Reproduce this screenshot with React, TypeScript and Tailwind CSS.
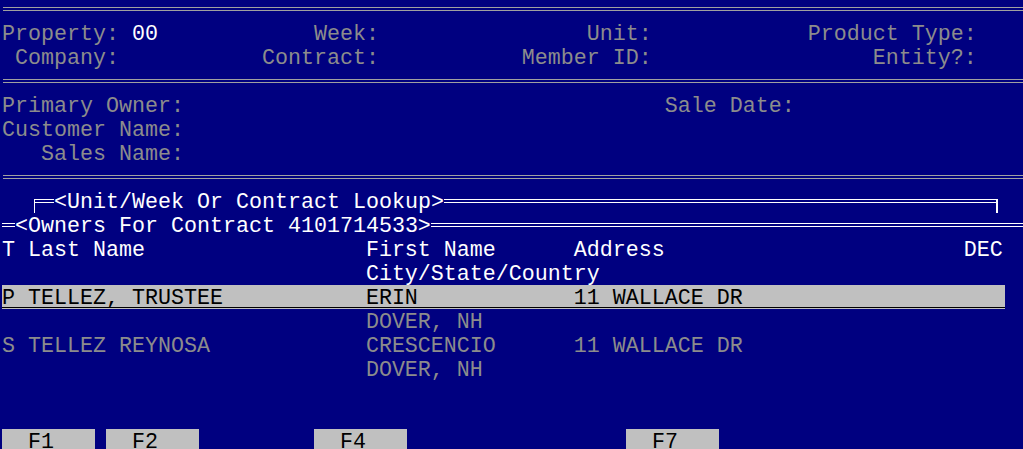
const gray = "text-[#8c8c8c]";

// lay text out on the terminal's character grid
const cols = (...parts: [number, string][]) =>
  parts.reduce((s, [c, t]) => s.padEnd(c) + t, "");

const DoubleLine = ({ white = false }: { white?: boolean }) => (
  <div
    className={`h-[4px] flex-1 border-y ${white ? "border-white" : "border-[#a0a0a0]"}`}
  />
);

const Row = ({ children, className = "" }: { children?: React.ReactNode; className?: string }) => (
  <div className={`h-[24px] shrink-0 whitespace-pre pl-[2px] pt-[4px] leading-[20px] ${className}`}>
    {children}
  </div>
);

const Rule = () => (
  <div className="flex h-[24px] shrink-0 items-center pl-[3px]">
    <DoubleLine />
  </div>
);

const keys = ["F1", "F2", "", "F4", "", "", "F7"];

export default function App() {
  return (
    <div
      className="flex h-[449px] w-[1023px] flex-col overflow-hidden bg-[#000080] text-[21.67px]"
      style={{ fontFamily: '"Liberation Mono", "Courier New", monospace' }}
    >
      <div className="-mt-[3px] flex h-[24px] shrink-0 items-center pl-[3px]">
        <DoubleLine />
      </div>
      <Row className={gray}>
        {"Property: "}
        <span className="text-white">00</span>
        {cols([12, ""], [24, "Week:"], [45, "Unit:"], [62, "Product Type:"]).slice(12)}
      </Row>
      <Row className={gray}>
        {cols([1, "Company:"], [20, "Contract:"], [40, "Member ID:"], [67, "Entity?:"])}
      </Row>
      <Rule />
      <Row className={gray}>{cols([0, "Primary Owner:"], [51, "Sale Date:"])}</Row>
      <Row className={gray}>Customer Name:</Row>
      <Row className={gray}>{cols([3, "Sales Name:"])}</Row>
      <Rule />

      {/* lookup frame */}
      <div className="flex h-[24px] shrink-0 items-start text-white">
        <div className="w-[34px] shrink-0" />
        <div className="mt-[10px] h-[14px] w-[20px] shrink-0 border-l border-t border-white">
          <div className="mt-[2px] border-t border-white" />
        </div>
        <span className="whitespace-pre pt-[4px] leading-[20px]">{"<Unit/Week Or Contract Lookup>"}</span>
        <div className="mt-[10px] flex flex-1">
          <DoubleLine white />
        </div>
        <div className="mt-[10px] h-[14px] w-[2px] shrink-0 bg-white" />
        <div className="w-[25px] shrink-0" />
      </div>
      <div className="flex h-[24px] shrink-0 items-start pl-[2px] text-white">
        <div className="mt-[10px] flex w-[13px] shrink-0">
          <DoubleLine white />
        </div>
        <span className="whitespace-pre pt-[4px] leading-[20px]">{"<Owners For Contract 4101714533>"}</span>
        <div className="mt-[10px] flex flex-1">
          <DoubleLine white />
        </div>
      </div>

      <Row className="text-white">
        {cols([0, "T Last Name"], [28, "First Name"], [44, "Address"], [74, "DEC"])}
      </Row>
      <Row className="text-white">{cols([28, "City/State/Country"])}</Row>
      <div className="ml-[2px] h-[24px] w-[1003px] shrink-0 whitespace-pre bg-[#c0c0c0] pt-[4px] leading-[20px] text-black shadow-[inset_0_-1px_0_#c0c0c0,inset_0_-2px_0_#000]">
        {cols([0, "P TELLEZ, TRUSTEE"], [28, "ERIN"], [44, "11 WALLACE DR"])}
      </div>
      <Row className={gray}>{cols([28, "DOVER, NH"])}</Row>
      <Row className={gray}>
        {cols([0, "S TELLEZ REYNOSA"], [28, "CRESCENCIO"], [44, "11 WALLACE DR"])}
      </Row>
      <Row className={gray}>{cols([28, "DOVER, NH"])}</Row>
      <Row />
      <Row />

      <div className="flex h-[24px] shrink-0 gap-[11px] pl-[2px]">
        {keys.map((k, i) => (
          <div
            key={i}
            className={`h-[24px] w-[93px] shrink-0 whitespace-pre pl-[26px] pt-[4px] leading-[20px] text-black ${k ? "bg-[#c0c0c0]" : ""}`}
          >
            {k}
          </div>
        ))}
      </div>
    </div>
  );
}
